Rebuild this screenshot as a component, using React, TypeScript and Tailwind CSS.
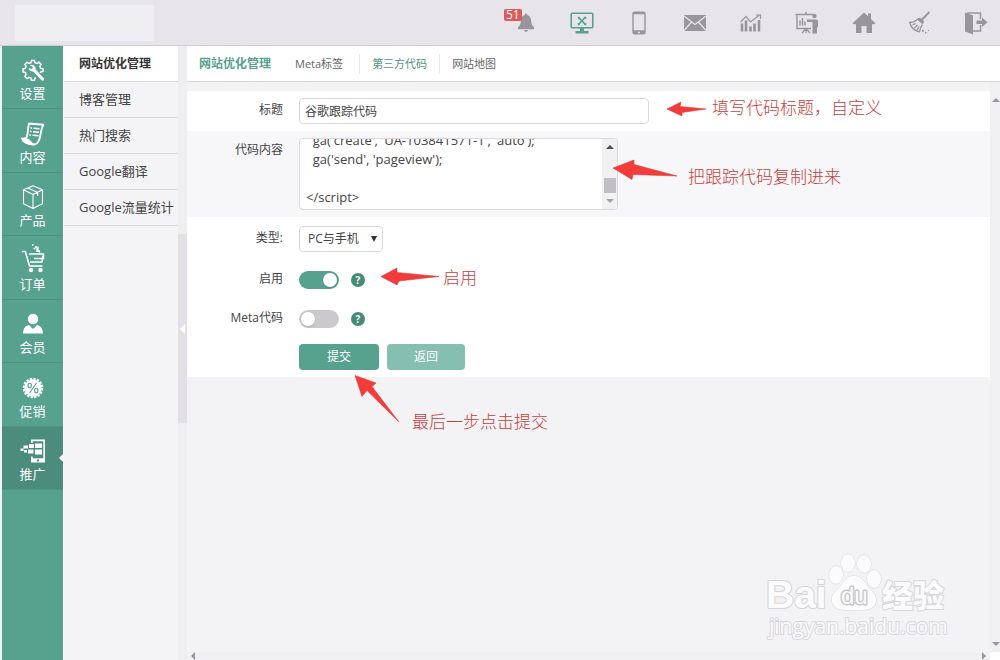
import { useEffect, useRef, useState } from "react";
import type { ReactNode } from "react";

const CODE = `  ga('create', 'UA-103841571-1', 'auto');
  ga('send', 'pageview');

</script>`;

/* ---------- Toolbar icons ---------- */

const BellIcon = () => (
  <svg viewBox="0 0 24 24" className="h-6 w-6" fill="currentColor">
    <path d="M12 2.5c.8 0 1.2.6 1.2 1.4 2.6.6 3.7 2.8 3.9 5.6.2 3.4.9 5 2.9 6.8v1.9H4v-1.9c2-1.8 2.7-3.4 2.9-6.8.2-2.8 1.3-5 3.9-5.6 0-.8.4-1.4 1.2-1.4z" />
    <path d="M10.3 19h3.4c0 1.2-.7 2-1.7 2s-1.7-.8-1.7-2z" />
  </svg>
);

const MonitorIcon = () => (
  <svg viewBox="0 0 24 24" className="h-6 w-6" fill="none" stroke="currentColor">
    <rect x="1.2" y="2.2" width="21.6" height="14.6" rx="1" strokeWidth="1.6" />
    <path d="M10 17h4v3h4.5v2.5h-13V20H10z" fill="currentColor" stroke="none" />
    <path d="M8.5 6.5l7 7M15.5 6l-7 7.5" strokeWidth="1.7" />
    <path d="M7.5 5.5l3 1-2 2zM14 12l2.8.5-.8 1.8-1.8-.3zM14.3 7.500l.7-2.200 2 2-2.200.7zM7.200 12.500l2-.5.8 1.500-1.500 1.300z" fill="currentColor" stroke="none" />
  </svg>
);

const PhoneIcon = () => (
  <svg viewBox="0 0 24 24" className="h-6 w-6" fill="currentColor">
    <path
      fillRule="evenodd"
      d="M7.5.5h9A2.2 2.2 0 0 1 18.7 2.7v18.6a2.2 2.2 0 0 1-2.2 2.2h-9a2.2 2.2 0 0 1-2.2-2.2V2.7A2.2 2.2 0 0 1 7.5.5zM6.7 3.3v16h10.6v-16zM12 20.4a1 1 0 1 0 0 2 1 1 0 0 0 0-2z"
    />
  </svg>
);

const MailIcon = () => (
  <svg viewBox="0 0 24 24" className="h-6 w-6">
    <rect x="1" y="4" width="22" height="16" fill="currentColor" />
    <path d="M1 5l11 8.5L23 5M1 19.5L8.5 11M23 19.5L15.5 11" fill="none" stroke="#e7e5e9" strokeWidth="1.2" />
  </svg>
);

const ChartIcon = () => (
  <svg viewBox="0 0 24 24" className="h-6 w-6" fill="none" stroke="currentColor">
    <path d="M3 20.5v-8M7 20.5v-11M11.5 20.5v-5M15.5 20.5v-8M20 20.5V9" strokeWidth="2.6" />
    <path d="M1.5 11L7 5.5l4.5 5.5L20.5 4M17 4h4.5v4" strokeWidth="1.2" />
  </svg>
);

const PresentIcon = () => (
  <svg viewBox="0 0 24 24" className="h-6 w-6" fill="none" stroke="currentColor">
    <path d="M16 3.5H2v14h14M.5 3.5h18M11 1v2" strokeWidth="1.4" />
    <path d="M5 14.5v-5M7.5 14.5V7M10 14.5v-4" strokeWidth="1.5" />
    <path d="M11 18v4M10.5 18L7 22M11.5 18l3.5 4" strokeWidth="1.3" />
    <circle cx="19.5" cy="5" r="2.2" fill="currentColor" stroke="none" />
    <path d="M12 8.5h9.5a1.5 1.5 0 0 1 1.5 1.5v6h-1v6.5h-4.5V11H12z" fill="currentColor" stroke="none" />
  </svg>
);

const HomeIcon = () => (
  <svg viewBox="0 0 24 24" className="h-6 w-6" fill="currentColor">
    <path d="M12 1.5l4 3.7V2.5h3v5.5l4.5 4.2-1.5 1H20V22h-5.5v-7h-5v7H4v-8.800H2l-1.500-1z" />
  </svg>
);

const BroomIcon = () => (
  <svg viewBox="0 0 24 24" className="h-6 w-6" fill="none" stroke="currentColor">
    <path d="M21.5 1L14 8.5" strokeWidth="2" />
    <path d="M10 7c3-.5 6 1.5 6 5l-1.8 1L9 8.5z" fill="currentColor" stroke="none" />
    <path d="M9.5 8.2C7 11.2 4.5 11.5 1.8 11.5c1.2 5 4.7 8.5 9.7 9.3.5-3 1-5 3-7.5M4.5 14l3-1.5M6.5 17l3-3M9 19.5l2-4" strokeWidth="1.3" />
    <path d="M14 19h1.8v1.8H14zM17 21h1.5v1.5H17zM20 19h1v1h-1z" fill="currentColor" stroke="none" />
  </svg>
);

const ExitIcon = () => (
  <svg viewBox="0 0 24 24" className="h-6 w-6">
    <path d="M1 1.5l8 3v19l-8-3z" fill="currentColor" />
    <path d="M3 2h13.5v6M16.5 14v6H9" fill="none" stroke="currentColor" strokeWidth="1.5" />
    <path d="M12.5 9.5H18V6.5l5.5 4.7-5.5 4.7v-3h-5.5z" fill="currentColor" />
  </svg>
);

/* ---------- Sidebar icons ---------- */

const SettingsIcon = () => (
  <svg viewBox="0 0 24 24" className="h-6 w-6" fill="none" stroke="currentColor">
    <path
      d="M15 19.7l-1 .4-.5 2.2h-3l-.5-2.2-2-.8-2 1.2-2.1-2.1 1.2-2-.8-2-2.3-.5v-3l2.3-.5.8-2-1.2-2L6 4.3l2 1.2 2-.8.5-2.2h3l.5 2.2 2 .8 2-1.2 2.1 2.1-1.2 2 .8 2 2.3.5v2.6l-2.3.5-.4 1"
      strokeWidth="1.5"
    />
    <path d="M13 12l8.5 9" strokeWidth="3.2" strokeLinecap="round" />
    <path d="M8.7 7.2a4 4 0 0 1 5.6 5 4 4 0 0 1-6.8-2.2l3.2 1 1.5-1.7z" fill="currentColor" stroke="none" />
  </svg>
);

const ContentIcon = () => (
  <svg viewBox="0 0 24 24" className="h-6 w-6" fill="none" stroke="currentColor">
    <path d="M8 1.5l14.5 1.3c-1.5 2-2 4-2.5 7-.6 4.5-1.5 12-6.5 12.7C7 22.8 2 20 1 16.5c3 .6 4 .3 4.8-1.5C7 11 7 5 8 1.5z" strokeWidth="1.9" strokeLinejoin="round" />
    <path d="M1 16.5c4 .5 6-.3 8.5 2.5 1 1.5 2.5 3 4 3.5-5 .5-11-1.5-12.5-6z" fill="currentColor" />
    <path d="M9.5 6h1.5M12.5 6.2l6 .5M9 9.5h1.5M12 9.7l6 .5M8.5 13H10M11.5 13.2l6 .5" strokeWidth="1.6" />
  </svg>
);

const BoxIcon = () => (
  <svg viewBox="0 0 24 24" className="h-6 w-6" fill="none" stroke="currentColor" strokeWidth="1.1" strokeLinejoin="round">
    <path d="M12 .8l9.5 4v14L12 23.5l-9.5-4.7v-14zM2.5 4.8L12 9.5l9.5-4.7M12 9.5v14M7 2.9l9.7 4.6v3.5" />
  </svg>
);

const CartIcon = () => (
  <svg viewBox="0 0 24 30" className="h-[30px] w-6" fill="none" stroke="currentColor" strokeWidth="1.6">
    <path d="M.8 8.5h3.5L8.5 23h13" />
    <path d="M8 11h14.5v4.5H13M22.5 11l-1.5 8H9" />
    <circle cx="10" cy="27" r="2.2" fill="currentColor" stroke="none" />
    <circle cx="19.5" cy="27" r="2.2" fill="currentColor" stroke="none" />
    <path d="M11 2h1.5M14 4h2M17 3.5v3M12.5 5.5h2M15 8h4M15.5 5.5l3.5 4" strokeWidth="1.4" />
  </svg>
);

const MemberIcon = () => (
  <svg viewBox="0 0 24 24" className="h-6 w-6" fill="currentColor">
    <circle cx="12" cy="7" r="5.2" />
    <path d="M2 21.5c.3-5 2-7.5 6-8.5l4 4 4-4c4 1 5.7 3.5 6 8.5z" />
  </svg>
);

const PromoIcon = () => (
  <svg viewBox="0 0 24 24" className="h-6 w-6">
    <circle cx="12" cy="12" r="8.6" fill="currentColor" />
    <circle cx="12" cy="12" r="9" fill="none" stroke="currentColor" strokeWidth="2.6" strokeDasharray="2.35 1.184" />
    <path d="M15.5 7l-7 10" stroke="#57a18f" strokeWidth="1.2" />
    <ellipse cx="8.7" cy="9.5" rx="1.7" ry="2.3" fill="none" stroke="#57a18f" strokeWidth="1.1" />
    <ellipse cx="15.3" cy="14.5" rx="1.7" ry="2.3" fill="none" stroke="#57a18f" strokeWidth="1.1" />
  </svg>
);

const SpreadIcon = () => (
  <svg viewBox="0 0 28 24" className="h-6 w-7" fill="currentColor">
    <path fillRule="evenodd" d="M12 .5h14v23H12v-6h1.7v1.7h10.6V2.2H13.7V4H12zM19 20.2a1.2 1.2 0 1 0 0 2.4 1.2 1.2 0 0 0 0-2.4z" />
    <path d="M10 5h5v4h-5zM16 4.5h7v4.5h-7zM4.5 6.5H9v3H4.5zM9 10.5h5.5v4H9zM16 10.5h7v5h-7zM5 11h3v2.5H5zM1.5 9.5h3V12h-3z" />
  </svg>
);

const toolbar = [
  { name: "通知", Icon: BellIcon, badge: "51" },
  { name: "网站管理", Icon: MonitorIcon, active: true },
  { name: "手机", Icon: PhoneIcon },
  { name: "邮件", Icon: MailIcon },
  { name: "统计", Icon: ChartIcon },
  { name: "教程", Icon: PresentIcon },
  { name: "首页", Icon: HomeIcon },
  { name: "清理缓存", Icon: BroomIcon },
  { name: "退出", Icon: ExitIcon },
];

const sections = [
  { name: "设置", Icon: SettingsIcon },
  { name: "内容", Icon: ContentIcon },
  { name: "产品", Icon: BoxIcon },
  { name: "订单", Icon: CartIcon },
  { name: "会员", Icon: MemberIcon },
  { name: "促销", Icon: PromoIcon },
  { name: "推广", Icon: SpreadIcon, active: true },
];

const submenu = ["博客管理", "热门搜索", "Google翻译", "Google流量统计"];

function Header() {
  return (
    <header className="flex h-[46px] shrink-0 items-center justify-between border-b border-[#cfcdd1] bg-[#e7e5e9] pl-[15px] pr-3">
      <div className="h-9 w-[139px] bg-[#efeef1]" />
      <div className="flex w-[474px] justify-between">
        {toolbar.map(({ name, Icon, badge, active }) => (
          <button
            key={name}
            type="button"
            aria-label={name}
            className={`relative ${active ? "text-[#57a18f]" : "text-[#98969a]"}`}
          >
            <Icon />
            {badge && (
              <span className="absolute -left-2.5 -top-0.5 rounded-xs bg-[#dd5a5a] px-0.5 text-[12px] leading-3 text-white">
                {badge}
              </span>
            )}
          </button>
        ))}
      </div>
    </header>
  );
}

function Sidebar() {
  return (
    <nav className="w-[61px] shrink-0 bg-[#57a18f]">
      <div className="grid h-[444px] grid-rows-7">
        {sections.map(({ name, Icon, active }) => (
          <a
            key={name}
            href="#"
            className={`relative flex flex-col items-center justify-end gap-0.5 border-b border-[#4b9482] pb-1.5 text-[13px] leading-[18px] text-white ${active ? "bg-[#4a8d7c]" : ""}`}
          >
            <Icon />
            <span>{name}</span>
            {active && (
              <span className="absolute right-0 top-1/2 -translate-y-1/2 border-y-4 border-r-4 border-y-transparent border-r-white" />
            )}
          </a>
        ))}
      </div>
    </nav>
  );
}

function Submenu() {
  return (
    <aside className="w-[115px] shrink-0 border-l border-white bg-[#f4f3f5]">
      <h2 className="flex h-9 items-center border-b border-[#dad8dc] bg-white pl-[15px] text-[12px] font-bold text-[#333]">
        网站优化管理
      </h2>
      {submenu.map((item) => (
        <a
          key={item}
          href="#"
          className="flex h-9 items-center whitespace-nowrap border-b border-[#dad8dc] pl-[15px] text-[13px]"
        >
          {item}
        </a>
      ))}
    </aside>
  );
}

function Row({ label, id, className = "", children }: { label: string; id: string; className?: string; children: ReactNode }) {
  return (
    <div className={`flex gap-4 ${className}`}>
      <label htmlFor={id} className="w-24 shrink-0 pt-1 text-right leading-4">
        {label}
      </label>
      {children}
    </div>
  );
}

function Toggle({ id, on }: { id: string; on: boolean }) {
  const [checked, setChecked] = useState(on);
  return (
    <div className="flex items-center gap-3 self-start pt-1">
      <input
        id={id}
        type="checkbox"
        checked={checked}
        onChange={(e) => setChecked(e.target.checked)}
        className="h-[18px] w-10 cursor-pointer appearance-none rounded-full bg-[#cbc9cd] p-0.5 before:block before:h-3.5 before:w-3.5 before:rounded-full before:bg-white before:shadow checked:bg-[#57a18f] checked:before:ml-[22px]"
      />
      <button
        type="button"
        aria-label="帮助"
        className="h-3.5 w-3.5 rounded-full bg-[#468a78] text-center text-[10px] font-bold leading-[14px] text-white"
      >
        ?
      </button>
    </div>
  );
}

function CodeBox() {
  const ref = useRef<HTMLTextAreaElement>(null);
  useEffect(() => {
    if (ref.current) ref.current.scrollTop = ref.current.scrollHeight;
  }, []);
  return (
    <div className="flex h-[72px] w-[319px] overflow-hidden rounded-[4px] border border-[#dcdadf] bg-white">
      <textarea
        id="code"
        ref={ref}
        defaultValue={CODE}
        className="min-w-0 flex-1 resize-none overflow-hidden bg-transparent px-1.5 pb-0.5 text-[13px] leading-[19px] outline-none"
      />
      <div className="flex w-[15px] flex-col items-center bg-[#f1f0f3] py-1.5">
        <span className="border-x-4 border-b-4 border-x-transparent border-b-[#505050]" />
        <span className="mt-auto h-[15px] w-3 bg-[#c1bfc3]" />
        <span className="mt-1.5 border-x-4 border-t-4 border-x-transparent border-t-[#a3a3a3]" />
      </div>
    </div>
  );
}

function Content() {
  return (
    <main className="flex min-w-0 flex-1 flex-col">
      <div className="flex h-9 shrink-0 items-center border-b border-[#d8d6da] bg-white text-[11px] text-[#666]">
        <h1 className="pl-3 pr-2 text-[12px] font-bold text-[#57a18f]">网站优化管理</h1>
        <a href="#" className="px-4 leading-5">Meta标签</a>
        <a href="#" className="border-x border-[#ecebee] px-3 leading-5 text-[#4f9584]">第三方代码</a>
        <a href="#" className="px-3 leading-5">网站地图</a>
      </div>

      <div className="flex flex-1">
        <div className="flex min-w-0 flex-1 flex-col">
          <form className="mt-[9px] bg-white" onSubmit={(e) => e.preventDefault()}>
            <Row label="标题" id="title" className="py-[7px]">
              <input
                id="title"
                type="text"
                defaultValue="谷歌跟踪代码"
                className="h-[26px] w-[350px] rounded-[4px] border border-[#dcdadf] bg-white px-[5px] outline-none"
              />
            </Row>
            <Row label="代码内容" id="code" className="bg-[#f7f6f8] py-[7px]">
              <CodeBox />
            </Row>
            <div className="pb-[7px] pt-[9px]">
              <Row label="类型:" id="type" className="h-[41px]">
                <div className="relative h-[26px]">
                  <select
                    id="type"
                    className="h-[26px] w-[84px] appearance-none rounded-[4px] border border-[#dcdadf] bg-white pl-2 outline-none"
                  >
                    <option>PC与手机</option>
                  </select>
                  <span className="pointer-events-none absolute right-1.5 top-2.5 border-x-[3px] border-t-[6px] border-x-transparent border-t-[#333]" />
                </div>
              </Row>
              <Row label="启用" id="enabled" className="h-[39px]">
                <Toggle id="enabled" on />
              </Row>
              <Row label="Meta代码" id="meta" className="h-[38px]">
                <Toggle id="meta" on={false} />
              </Row>
              <div className="flex gap-2 pl-28 text-white">
                <button type="submit" className="h-[26px] w-20 rounded-[4px] bg-[#57a18f]">提交</button>
                <button type="button" className="h-[26px] w-[78px] rounded-[4px] bg-[#84bfb0]">返回</button>
              </div>
            </div>
          </form>
          <div className="mt-auto flex h-2 items-center justify-between bg-[#f0eff2] px-1">
            <span className="border-y-4 border-r-4 border-y-transparent border-r-[#98969a]" />
            <span className="border-y-4 border-l-4 border-y-transparent border-l-[#98969a]" />
          </div>
        </div>
        <div className="flex w-2.5 shrink-0 flex-col items-end bg-[#f0eff2] pt-4">
          <span className="border-x-4 border-b-4 border-x-transparent border-b-[#98969a]" />
          <span className="mt-auto border-x-4 border-t-4 border-x-transparent border-t-[#98969a]" />
          <span className="mt-1.5 h-2 w-2.5 bg-white" />
        </div>
      </div>
    </main>
  );
}

/* ---------- Tutorial notes drawn over the page ---------- */

function Arrow({ className, points, box }: { className: string; points: string; box: string }) {
  return (
    <svg viewBox={box} className={`absolute ${className}`}>
      <polygon points={points} fill="#f33b3b" stroke="#d94040" strokeWidth=".6" />
    </svg>
  );
}

function Notes() {
  return (
    <div className="pointer-events-none absolute inset-0 whitespace-nowrap text-[17px] font-light leading-6 text-[#c8403b]">
      <Arrow className="left-[667px] top-[101px] h-4 w-[39px]" box="0 0 39 16" points="0,8 14,1 13,5.5 39,8 15,11.5 15,15" />
      <p className="absolute left-[712px] top-24">填写代码标题，自定义</p>
      <Arrow className="left-[613px] top-[159px] h-[21px] w-16" box="0 0 64 21" points="0,9 21,1 21,5.5 64,17 20,15.5 19,20.5" />
      <p className="absolute left-[688px] top-[165px]">把跟踪代码复制进来</p>
      <Arrow className="left-[381px] top-[267px] h-[19px] w-[59px]" box="0 0 59 19" points="0,9.5 16,1 16,5.5 58,9.5 18,14 16,18" />
      <p className="absolute left-[443px] top-[266px]">启用</p>
      <Arrow className="left-[355px] top-[375px] h-12 w-[45px]" box="0 0 45 48" points="0,0.5 21,8 17,11.5 44,47 12,15.5 7,21.5" />
      <p className="absolute left-[412px] top-[410px]">最后一步点击提交</p>
    </div>
  );
}

function Watermark() {
  return (
    <div className="pointer-events-none absolute bottom-5 right-[45px] w-[194px]">
      <svg
        viewBox="0 0 194 60"
        className="block h-[60px] w-full overflow-visible font-['Liberation_Sans','Noto_Sans_CJK_SC',sans-serif]"
        fill="#fbfbfc"
        stroke="#d6d4d8"
        strokeWidth="2"
        strokeLinejoin="round"
        style={{ paintOrder: "stroke" }}
      >
        <text x="5" y="56" fontSize="39" fontWeight="700">Bai</text>
        <ellipse cx="75" cy="23" rx="7" ry="9" strokeWidth="1" />
        <ellipse cx="87" cy="11" rx="7" ry="9" strokeWidth="1" />
        <ellipse cx="103" cy="12" rx="7" ry="9" strokeWidth="1" />
        <ellipse cx="113" cy="27" rx="7" ry="9" strokeWidth="1" />
        <path d="M93 24c-9 0-11 8-16 13-5 4-7 8-6 13 2 9 12 8 22 8s20 1 22-8c1-5-2-9-6-13-5-5-7-13-16-13z" strokeWidth="1" />
        <text x="80" y="52" fontSize="24" strokeWidth="3" stroke="#c9c7cb">du</text>
        <text x="121" y="55" fontSize="31" fontWeight="900">经验</text>
      </svg>
      <p className="pl-2 text-[21px] leading-7 text-[#fbfbfc] [-webkit-text-stroke:2px_#d9d7db] [paint-order:stroke]">
        jingyan.baidu.com
      </p>
    </div>
  );
}

export default function App() {
  return (
    <div className="relative flex min-h-screen flex-col overflow-hidden bg-[#f3f2f5] font-['Open_Sans','Noto_Sans_CJK_SC',sans-serif] text-[12px] text-[#444]">
      <Header />
      <div className="flex flex-1 pl-0.5">
        <Sidebar />
        <Submenu />
        <div className="w-[9px] shrink-0 bg-[#eeedf0] pt-[188px]">
          <button type="button" aria-label="收起菜单" className="flex h-[189px] w-full items-center justify-center bg-[#e2e0e4]">
            <span className="border-y-[5px] border-r-[5px] border-y-transparent border-r-white" />
          </button>
        </div>
        <Content />
      </div>
      <Watermark />
      <Notes />
    </div>
  );
}
